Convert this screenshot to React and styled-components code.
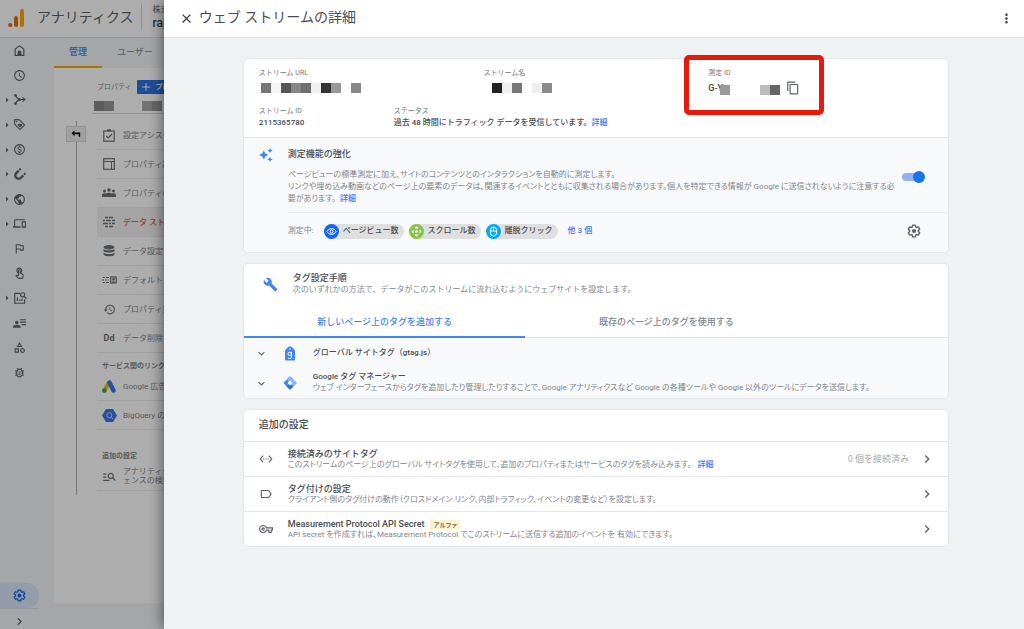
import React, { useState } from "react";
import styled, { createGlobalStyle, css } from "styled-components";
import {
  MdArrowRight,
  MdChevronRight,
  MdClose,
  MdContentCopy,
  MdDevices,
  MdHistory,
  MdKeyboardArrowDown,
  MdLabelOutline,
  MdManageSearch,
  MdMoreVert,
  MdOutlineBugReport,
  MdOutlineCategory,
  MdOutlineFlag,
  MdOutlineLoyalty,
  MdOutlineMonetizationOn,
  MdOutlineSchedule,
  MdOutlineTouchApp,
  MdOutlineVpnKey,
  MdPublic,
  MdSettingsEthernet,
} from "react-icons/md";

const GlobalStyle = createGlobalStyle`
  *, *::before, *::after {
    box-sizing: border-box;
  }

  body {
    margin: 0;
    font-family: Roboto, "Noto Sans CJK JP", sans-serif;
    font-size: 8px;
    line-height: 12px;
    color: #5f6368;
  }

  button {
    margin: 0;
    padding: 0;
    border: none;
    background: none;
    font: inherit;
    color: inherit;
    cursor: pointer;
  }

  a {
    color: #3c78e8;
    font-weight: 500;
    text-decoration: none;
  }

  h1, h2, h3, p, ul, dl, dd {
    margin: 0;
    padding: 0;
  }

  ul {
    list-style: none;
  }

  svg {
    display: block;
    flex: none;
  }
`;

/* page behind the drawer */

const Page = styled.div`
  position: relative;
  display: flex;
  flex-direction: column;
  height: 100vh;
  overflow: hidden;
  background: #f3f5f8;
`;

const TopBar = styled.header`
  display: flex;
  align-items: center;
  height: 38px;
  padding: 0 0 4px 8px;
  background: #fff;
  border-bottom: 1px solid #dfe1e4;
  white-space: nowrap;
`;

const Brand = styled.span`
  margin-left: 12px;
  font-size: 14px;
  line-height: 18px;
`;

const Account = styled.div`
  margin-left: 8px;
  padding-left: 10px;
  border-left: 1px solid #d5d7da;
`;

const AccountName = styled.div`
  font-size: 12px;
  line-height: 14px;
  font-weight: 500;
  color: #3c4043;
`;

const Main = styled.div`
  display: flex;
  flex: 1;
  min-height: 0;
`;

const Rail = styled.nav`
  display: flex;
  flex-direction: column;
  flex: none;
  width: 54px;
`;

const RailList = styled.ul`
  display: grid;
  grid-auto-rows: 1fr;
  height: 347px;
`;

const RailItem = styled.button`
  display: flex;
  align-items: center;
  height: 100%;
  padding-left: ${(p) => (p.$open ? "1px" : "13px")};
`;

const RailActive = styled.button`
  display: flex;
  align-items: center;
  width: 39px;
  height: 25px;
  margin-top: auto;
  padding-left: 13px;
  border-radius: 0 12px 12px 0;
  background: #d7e6fb;
  color: #1a66d8;
`;

const RailExpand = styled.button`
  display: flex;
  align-items: center;
  justify-content: center;
  width: 39px;
  height: 21px;
  padding-top: 5px;
  border-top: 1px solid #dfe1e4;
`;

const Admin = styled.div`
  display: flex;
  flex-direction: column;
  flex: 1;
  padding-bottom: 26px;
`;

const AdminTabs = styled.div`
  display: flex;
  height: 30px;
  flex: none;
`;

const AdminTab = styled.button`
  padding: 0 15px;
  font-size: 9px;
  border-bottom: 2px solid ${(p) => (p.$active ? "#f9ab00" : "transparent")};
  color: ${(p) => (p.$active ? "#3c82f0" : "#80868b")};
  font-weight: ${(p) => (p.$active ? 500 : 400)};
`;

const AdminCard = styled.div`
  display: flex;
  flex: 1;
  padding-top: 12px;
  background: #fff;
`;

const Timeline = styled.div`
  display: flex;
  flex-direction: column;
  align-items: center;
  width: 20px;
  height: 374px;
  margin: 41px 11px 0 12px;
  background: linear-gradient(#b0b0b0, #b0b0b0) center / 1px 100% no-repeat;
`;

const BackButton = styled.button`
  display: flex;
  align-items: center;
  justify-content: center;
  width: 20px;
  height: 16px;
  margin-top: 5px;
  border: 1px solid #d8d8d8;
  background: #ececec;
  color: #000;
`;

const Property = styled.div`
  flex: 1;
  color: #80868b;
`;

const PropertyHead = styled.div`
  display: flex;
  align-items: center;
  gap: 5px;
  height: 14px;
  font-size: 7px;
  white-space: nowrap;
`;

const CreateButton = styled.button`
  display: flex;
  align-items: center;
  gap: 6px;
  height: 14px;
  padding: 0 5px;
  border-radius: 1px;
  background: #2f74e0;
  color: #fff;
  font-weight: 700;
`;

const PropertyName = styled.div`
  display: flex;
  gap: 26px;
  height: 20px;
  margin: 0 0 7px -5px;
  padding-top: 7px;
  border-bottom: 1px solid #d5d7da;
`;

const PropertyItem = styled.button`
  display: flex;
  align-items: center;
  gap: 7px;
  width: 100%;
  height: 29px;
  padding-left: 5px;
  border-bottom: 1px solid #ececec;
  text-align: left;
  line-height: 9px;
  white-space: nowrap;
  ${(p) =>
    p.$active &&
    css`
      background: #f2f2f2;
      color: #e8584c;
      font-weight: 500;
    `}
`;

const ItemIcon = styled.span`
  display: flex;
  justify-content: center;
  width: 14px;
  font-size: 9px;
  font-weight: 700;
  color: #6c7074;
`;

const SectionLabel = styled.h3`
  margin-top: ${(p) => (p.$spaced ? "20px" : "7px")};
  padding-left: 5px;
  font-size: 7px;
  line-height: 12px;
  font-weight: 700;
  white-space: nowrap;
`;

const Scrim = styled.div`
  position: absolute;
  inset: 0;
  background: rgba(0, 0, 0, 0.32);
`;

/* drawer */

const Drawer = styled.section`
  position: absolute;
  inset: 0 0 0 16%;
  display: flex;
  flex-direction: column;
  background: #eef2f3;
  box-shadow: 0 0 14px rgba(0, 0, 0, 0.6);
`;

const DrawerBar = styled.header`
  display: flex;
  align-items: center;
  flex: none;
  gap: 5px;
  height: 38px;
  padding: 0 10px 0 15px;
  background: #fff;
  border-bottom: 1px solid #e2e5e7;
  color: #3c4043;
`;

const DrawerTitle = styled.h1`
  flex: 1;
  padding-bottom: 3px;
  font-size: 14px;
  line-height: 20px;
  font-weight: 400;
  color: #4a4d51;
`;

const DrawerBody = styled.div`
  display: flex;
  flex-direction: column;
  flex: 1;
  gap: 10px;
  padding: 20px 75px 20px 79px;
  overflow: auto;
`;

const Card = styled.section`
  flex: none;
  background: #fff;
  border: 1px solid #e3e7ea;
  border-radius: 5px;
`;

const Details = styled.dl`
  display: flex;
  flex-direction: column;
  gap: 8px;
  padding: 8px 15px;
`;

const DetailRow = styled.div`
  display: grid;
  grid-template-columns: ${(p) => p.$columns};
`;

const Label = styled.dt`
  font-size: 7px;
  line-height: 12px;
  color: #70757a;
`;

const Value = styled.dd`
  display: flex;
  align-items: center;
  height: ${(p) => (p.$tall ? "18px" : "12px")};
  color: #4a4d51;
  font-weight: 500;
`;

const MeasurementId = styled(Value)`
  font-size: 9px;
  gap: 6px;
  color: #3c4043;
`;

const Highlighted = styled.div`
  position: relative;

  &::after {
    content: "";
    position: absolute;
    top: -12px;
    left: -24px;
    width: 140px;
    height: 60px;
    border: 5px solid #e8180c;
    border-radius: 5px;
    pointer-events: none;
  }
`;

const Blocks = styled.span`
  display: flex;
  margin-left: ${(p) => (p.$inset ? "8px" : "2px")};
`;

const IdBlocks = styled(Blocks)`
  margin: 3px 0 0 -9px;
`;

const Block = styled.span`
  width: 10px;
  height: 10px;
  background: ${(p) => p.$tone};
`;

const Enhanced = styled.div`
  display: grid;
  grid-template-columns: 44px 1fr;
  border-top: 1px solid #e6e9eb;
  border-radius: 0 0 5px 5px;
  background: #f8f9fb;
`;

const Sparkles = styled.div`
  padding: 10px 0 0 15px;
`;

const EnhancedText = styled.div`
  display: flex;
  align-items: center;
  gap: 7px;
  padding: 10px 23px 7px 0;
`;

const Grow = styled.div`
  flex: 1;
`;

const Title = styled.h2`
  display: flex;
  align-items: center;
  gap: 6px;
  font-size: ${(p) => (p.$small ? "8px" : "9px")};
  line-height: ${(p) => (p.$small ? "10px" : "12px")};
  font-weight: 500;
  color: #4a4d51;
`;

const Note = styled.p`
  line-height: ${(p) => (p.$tight ? "10px" : "12px")};
  color: #80868b;
  font-feature-settings: ${(p) => (p.$wide ? "normal" : '"palt"')};

  a {
    margin-left: 4px;
  }
`;

const EnhancedNote = styled(Note)`
  margin-top: 9px;
`;

const Toggle = styled.input`
  appearance: none;
  position: relative;
  flex: none;
  width: 23px;
  height: 12px;
  margin: 0;
  cursor: pointer;

  &::before {
    content: "";
    position: absolute;
    inset: 2px 2px 2px 0;
    border-radius: 4px;
    background: ${(p) => (p.checked ? "#8fb3f5" : "#bdc1c6")};
  }

  &::after {
    content: "";
    position: absolute;
    top: 0;
    left: ${(p) => (p.checked ? "11px" : "0")};
    width: 12px;
    height: 12px;
    border-radius: 50%;
    background: ${(p) => (p.checked ? "#1a73e8" : "#fff")};
  }
`;

const ChipRow = styled.div`
  grid-column: 2;
  display: flex;
  align-items: center;
  gap: 5px;
  height: 40px;
  padding: 0 27px 3px 0;
  border-top: 1px solid #e6e9eb;
`;

const ChipLabel = styled.span`
  padding-right: 5px;
  color: #80868b;
`;

const Chip = styled.span`
  display: flex;
  align-items: center;
  gap: 4px;
  height: 15px;
  padding-right: 5px;
  border-radius: 8px;
  background: #dfdfdf;
  color: #4a4d51;
  font-weight: 500;
`;

const ChipIcon = styled.span`
  display: flex;
  align-items: center;
  justify-content: center;
  width: 15px;
  height: 15px;
  border-radius: 50%;
  background: ${(p) => p.$color};
  color: #fff;
`;

const MoreLink = styled.a`
  margin: 0 auto 0 5px;
`;

const TagHead = styled.div`
  display: flex;
  align-items: center;
  gap: 15px;
  padding: 8px 19px 12px;
`;

const TabBar = styled.div`
  display: flex;
  height: 30px;
  border-bottom: 1px solid #e3e7ea;
`;

const Tab = styled.button`
  width: 40%;
  height: 30px;
  font-size: 9px;
  font-weight: 500;
  color: ${(p) => (p.$active ? "#4285f4" : "#80868b")};
  border-bottom: 2px solid ${(p) => (p.$active ? "#4285f4" : "transparent")};
`;

const TagList = styled.div`
  border-radius: 0 0 5px 5px;
  background: #f8f9fb;
`;

const TagRow = styled.button`
  display: grid;
  grid-template-columns: 12px 14px 1fr;
  align-items: center;
  gap: 0 16px;
  width: 100%;
  height: 30px;
  padding-left: 11px;
  text-align: left;
`;

const CardTitle = styled.h2`
  padding: 8px 15px 9px;
  font-size: 10px;
  line-height: 14px;
  font-weight: 500;
  color: #4a4d51;
`;

const SettingRow = styled.div`
  display: grid;
  grid-template-columns: 19px 1fr auto 15px;
  align-items: center;
  gap: 0 10px;
  height: 35px;
  padding: 0 14px 0 15px;
  border-top: 1px solid #e6e9eb;
`;

const Count = styled.span`
  font-size: 9px;
  color: #a6aaae;
`;

const Badge = styled.span`
  padding: 0 3px;
  background: #fdf1cf;
  font-size: 6px;
  line-height: 9px;
  font-weight: 700;
  color: #80704a;
`;

const Logo = () => (
  <svg width="17" height="20" viewBox="0 -2 17 20">
    <rect x="12" y="0" width="4" height="18" rx="2" fill="#f9ab00" />
    <rect x="6" y="7" width="4" height="11" rx="2" fill="#e37400" />
    <circle cx="2.2" cy="16" r="2.1" fill="#e37400" />
  </svg>
);

const HomeIcon = () => (
  <svg width="13" height="13" viewBox="0 0 24 24" fill="none" stroke="currentColor" strokeWidth="2.2">
    <path d="M4 21V9.5L12 3.5l8 6V21z" />
    <path d="M8.500 21v-5.500a3.500 3.500 0 0 1 7 0V21z" fill="currentColor" stroke="none" />
  </svg>
);

const BranchIcon = () => (
  <svg width="13" height="13" viewBox="0 0 24 24" fill="none" stroke="currentColor" strokeWidth="2.2">
    <path d="M5 4.500l1.500 3.500 5 4h10M5 19.500L6.500 16l5-4" />
    <path d="M17.500 8l4.500 4-4.500 4" />
    <circle cx="4.500" cy="4.500" r="2.500" fill="currentColor" stroke="none" />
    <circle cx="4.500" cy="19.500" r="2.500" fill="currentColor" stroke="none" />
    <circle cx="12" cy="12" r="2.800" fill="currentColor" stroke="none" />
  </svg>
);

const MagnetIcon = () => (
  <svg width="13" height="13" viewBox="0 0 24 24" fill="none" stroke="currentColor">
    <path d="M10.500 5L6 9.500a5.800 5.800 0 0 0 8.500 8.500l4.500-4.500" strokeWidth="4.500" />
    <path d="M12 3.500l2.500-2.500M20.500 12l2.500-2.500" strokeWidth="4" />
    <path d="M9.500 12.500l-1 1a1.500 1.500 0 0 0 2 2l1-1" stroke="#f3f5f8" strokeWidth="1.200" />
  </svg>
);

const ReportIcon = () => (
  <svg width="14" height="14" viewBox="0 0 24 24" fill="none" stroke="currentColor" strokeWidth="2">
    <path d="M12 4H3v17h17v-7" />
    <path d="M7.500 17v-6M11.500 17v-3M15.500 17v-4" />
    <circle cx="16.500" cy="6.500" r="3.500" />
    <path d="M19 9l4 4" />
  </svg>
);

const PersonListIcon = () => (
  <svg width="13" height="13" viewBox="0 0 24 24" fill="currentColor">
    <circle cx="7" cy="10" r="3.300" />
    <path d="M0 20v-2c0-2.500 3.500-3.800 7-3.800s7 1.300 7 3.800v2zM13 4h11v2.200H13zM13 8.500h11v2.200H13zM16 13h8v2.200h-8z" />
  </svg>
);

const GearIcon = ({ size }) => (
  <svg width={size} height={size} viewBox="0 0 24 24">
    <path
      fill="none"
      stroke="currentColor"
      strokeWidth="2.400"
      d="M19.430 12.980c.04-.32.07-.64.07-.98 0-.34-.03-.66-.07-.98l2.110-1.650c.19-.15.24-.42.12-.64l-2-3.460a.5.5 0 0 0-.61-.22l-2.490 1c-.52-.4-1.080-.73-1.690-.98l-.38-2.650A.488.488 0 0 0 14 2h-4c-.25 0-.46.18-.49.42l-.38 2.650c-.61.25-1.170.59-1.690.98l-2.490-1a.5.5 0 0 0-.61.22l-2 3.460c-.13.22-.07.49.12.64l2.110 1.650c-.04.32-.07.65-.07.98 0 .33.03.66.07.98l-2.110 1.650c-.19.15-.24.42-.12.64l2 3.460a.5.5 0 0 0 .61.22l2.490-1c.52.4 1.080.73 1.690.98l.38 2.650c.03.24.24.42.49.42h4c.25 0 .46-.18.49-.42l.38-2.650c.61-.25 1.170-.59 1.690-.98l2.490 1a.5.5 0 0 0 .61-.22l2-3.460c.12-.22.07-.49-.12-.64z"
    />
    <circle cx="12" cy="12" r="3.600" fill="currentColor" />
  </svg>
);

const BackIcon = () => (
  <svg width="10" height="8" viewBox="0 0 10 8">
    <path d="M3.500.5L.5 3.300l3 2.900V4.200h4.300v2.600h1.400V2.500H3.500z" fill="currentColor" />
  </svg>
);

const ClipboardIcon = () => (
  <svg width="12" height="13" viewBox="0 0 12 13" fill="none" stroke="currentColor" strokeWidth="1.200">
    <rect x="0.800" y="2" width="10.400" height="10.200" />
    <path d="M4 1.300h4" strokeWidth="2" />
    <path d="M3.300 7l2 2 3.700-4" />
  </svg>
);

const LayoutIcon = () => (
  <svg width="12" height="12" viewBox="0 0 12 12" fill="none" stroke="currentColor">
    <rect x="0.700" y="0.700" width="10.600" height="10.600" strokeWidth="1.200" />
    <path d="M1 3.500h10M8.500 4v7" />
  </svg>
);

const PeopleIcon = () => (
  <svg width="14" height="10" viewBox="0 0 14 10" fill="currentColor">
    <circle cx="2.500" cy="3" r="1.500" />
    <circle cx="7" cy="2" r="1.800" />
    <circle cx="11.500" cy="3" r="1.500" />
    <path d="M0 9V7c0-1.200 1.200-1.700 2.500-1.700.6 0 1.100.1 1.500.3.700-.6 1.800-.9 3-.9s2.300.3 3 .9c.4-.2.900-.3 1.500-.3 1.300 0 2.500.5 2.500 1.700v2z" />
  </svg>
);

const StreamsIcon = () => (
  <svg width="12" height="12" viewBox="0 0 12 12" fill="none" stroke="currentColor" strokeWidth="1.500">
    <path d="M2 1.500h3M6 1.500h4M0 4.500h2M3 4.500h5M9 4.500h3M0 7.500h5M6 7.500h2M9 7.500h3M2 10.500h3M6 10.500h4" />
  </svg>
);

const DatabaseIcon = () => (
  <svg width="12" height="12" viewBox="0 0 12 12" fill="currentColor">
    <ellipse cx="6" cy="2.200" rx="5.500" ry="2.200" />
    <path d="M.5 3.800c1.500 2 9.500 2 11 0V6c-1.500 2-9.500 2-11 0zM.5 7.400c1.500 2 9.500 2 11 0v2c-1.500 2.600-9.500 2.600-11 0z" />
  </svg>
);

const IdentityIcon = () => (
  <svg width="15" height="8" viewBox="0 0 15 8" fill="none" stroke="currentColor" strokeWidth="1.200">
    <path d="M1 1.500h2M4 1.500h3M0 4h2M3 4h2M1 6.500h2M4 6.500h3M6 4h1" />
    <rect x="8.700" y="1" width="5.500" height="6" />
    <circle cx="11.500" cy="3.300" r=".8" fill="currentColor" />
    <path d="M10 6h3" />
  </svg>
);

const AdsIcon = () => (
  <svg width="14" height="13" viewBox="0 0 14 13" strokeLinecap="round">
    <path d="M2.500 10.500L6.500 3" stroke="#fbbc04" strokeWidth="4" />
    <path d="M7.500 2.500l4 8" stroke="#3c78e8" strokeWidth="4.500" />
    <circle cx="2.400" cy="10.600" r="2.300" fill="#34a853" />
  </svg>
);

const BigQueryIcon = () => (
  <svg width="15" height="13" viewBox="0 0 15 13">
    <path d="M4 0h7l4 6.500-4 6.500H4L0 6.500z" fill="#3c78e8" />
    <circle cx="7.300" cy="6.200" r="2.500" fill="none" stroke="#c3d6f8" />
    <path d="M9 8l2 2" stroke="#c3d6f8" />
  </svg>
);

const SparkleIcon = () => (
  <svg width="14" height="14" viewBox="0 0 14 14" fill="#4285f4">
    <path d="M4.800 2.500l1.600 3L9.500 7 6.400 8.500l-1.600 3-1.600-3L0 7l3.200-1.500zM11 .2l.9 1.600 1.700.8-1.700.8L11 5l-.9-1.600-1.700-.8 1.700-.8zM11 9l.9 1.600 1.700.8-1.700.8-.9 1.600-.9-1.600-1.700-.8 1.700-.8z" />
  </svg>
);

const EyeIcon = () => (
  <svg width="11" height="11" viewBox="0 0 11 11" fill="none" stroke="currentColor">
    <path d="M.8 5.500C2.800 1.800 8.200 1.800 10.200 5.500 8.200 9.200 2.800 9.200.8 5.500z" />
    <circle cx="5.500" cy="5.500" r="1.500" />
  </svg>
);

const ScrollIcon = () => (
  <svg width="11" height="11" viewBox="0 0 11 11" fill="currentColor">
    <circle cx="5.500" cy="5.500" r="1.300" />
    <path d="M5.500.3l2 2.200h-4zM5.500 10.700l2-2.200h-4zM.3 5.500l2.200-2v4zM10.700 5.500l-2.200-2v4z" />
  </svg>
);

const MouseIcon = () => (
  <svg width="9" height="11" viewBox="0 0 9 11" fill="none" stroke="currentColor">
    <rect x="1.500" y="1" width="6" height="9" rx="3" />
    <path d="M1.500 5h6M4.500 1v4" />
  </svg>
);

const WrenchIcon = () => (
  <svg width="15" height="15" viewBox="0 0 24 24">
    <path
      fill="#4285f4"
      d="M22.700 19l-9.100-9.100c.9-2.300.4-5-1.500-6.900-2-2-5-2.400-7.400-1.300L9 6 6 9 1.600 4.700C.4 7.100.9 10.100 2.900 12.100c1.900 1.900 4.600 2.400 6.900 1.500l9.100 9.100c.4.4 1 .4 1.400 0l2.300-2.300c.5-.4.5-1.100.1-1.400z"
    />
  </svg>
);

const GtagIcon = () => (
  <svg width="14" height="15" viewBox="0 0 14 15">
    <path d="M4.500 1.500h5l2.500 3v9a1 1 0 0 1-1 1H3a1 1 0 0 1-1-1v-9z" fill="#4285f4" />
    <path d="M5 2a2 1.700 0 0 1 4 0" fill="#4285f4" />
    <circle cx="7" cy="3" r=".7" fill="#fff" />
    <circle cx="6.700" cy="7.800" r="1.700" fill="none" stroke="#fff" />
    <path d="M8.500 6v5c0 1.800-2.800 2-3.500.8" fill="none" stroke="#fff" />
  </svg>
);

const TagManagerIcon = () => (
  <svg width="14" height="14" viewBox="0 0 14 14">
    <path d="M7 .3L13.700 7 7 13.700.3 7z" fill="#4285f4" />
    <path d="M7 .3L13.700 7 10 10.700 3.700 3.600z" fill="#8ab4f8" />
    <path d="M3.600 10.400L7 13.700l3.300-3.300L7 7.800z" fill="#2f6fe0" />
    <path d="M7 4.600L9.400 7 7 9.400 4.600 7z" fill="#fff" />
  </svg>
);

const railItems = [
  { label: "ホーム", icon: <HomeIcon /> },
  { label: "リアルタイム", icon: <MdOutlineSchedule size={13} /> },
  { label: "ライフサイクル", icon: <BranchIcon />, open: true },
  { label: "エンゲージメント", icon: <MdOutlineLoyalty size={13} />, open: true },
  { label: "収益化", icon: <MdOutlineMonetizationOn size={13} />, open: true },
  { label: "維持率", icon: <MagnetIcon />, open: true },
  { label: "ユーザー属性", icon: <MdPublic size={13} />, open: true },
  { label: "テクノロジー", icon: <MdDevices size={13} />, open: true },
  { label: "コンバージョン", icon: <MdOutlineFlag size={13} /> },
  { label: "イベント", icon: <MdOutlineTouchApp size={13} /> },
  { label: "探索", icon: <ReportIcon />, open: true },
  { label: "オーディエンス", icon: <PersonListIcon /> },
  { label: "カスタム定義", icon: <MdOutlineCategory size={13} /> },
  { label: "DebugView", icon: <MdOutlineBugReport size={13} /> },
];

const propertyItems = [
  { text: "設定アシスタント", icon: <ClipboardIcon /> },
  { text: "プロパティ設定", icon: <LayoutIcon /> },
  { text: "プロパティのアクセス管理", icon: <PeopleIcon /> },
  { text: "データ ストリーム", icon: <StreamsIcon />, active: true },
  { text: "データ設定", icon: <DatabaseIcon /> },
  { text: "デフォルト", icon: <IdentityIcon /> },
  { text: "プロパティ変更履歴", icon: <MdHistory size={13} /> },
  { text: "データ削除リクエスト", icon: "Dd" },
];

const chips = [
  { text: "ページビュー数", color: "#1a66e8", icon: <EyeIcon /> },
  { text: "スクロール数", color: "#8bc34a", icon: <ScrollIcon /> },
  { text: "離脱クリック", color: "#03a9f4", icon: <MouseIcon /> },
];

const urlTones = ["#777", "#f5f5f5", "#555", "#868686", "#707070", "#eee", "#333", "#999", "#fff", "#888"];
const nameTones = ["#222", "#eee", "#777", "#fff", "#eee", "#8b8b8b"];
const idTones = ["#999", "#fff", "#fff", "#fff", "#bbb", "#666"];

const Mosaic = ({ tones, as: Wrapper = Blocks, inset }) => (
  <Wrapper $inset={inset}>
    {tones.map((tone, i) => (
      <Block key={i} $tone={tone} />
    ))}
  </Wrapper>
);

const PropertyRow = ({ icon, text, active }) => (
  <PropertyItem $active={active}>
    <ItemIcon>{icon}</ItemIcon>
    <span>{text}</span>
  </PropertyItem>
);

const AdminPage = () => (
  <>
    <TopBar>
      <Logo />
      <Brand>アナリティクス</Brand>
      <Account>
        <div>株式会社</div>
        <AccountName>rapport</AccountName>
      </Account>
    </TopBar>
    <Main>
      <Rail>
        <RailList>
          {railItems.map((item) => (
            <li key={item.label}>
              <RailItem $open={item.open} aria-label={item.label}>
                {item.open && <MdArrowRight size={12} />}
                {item.icon}
              </RailItem>
            </li>
          ))}
        </RailList>
        <RailActive aria-label="管理">
          <GearIcon size={13} />
        </RailActive>
        <RailExpand aria-label="展開">
          <MdChevronRight size={15} />
        </RailExpand>
      </Rail>
      <Admin>
        <AdminTabs>
          <AdminTab $active>管理</AdminTab>
          <AdminTab>ユーザー</AdminTab>
        </AdminTabs>
        <AdminCard>
          <Timeline>
            <BackButton aria-label="戻る">
              <BackIcon />
            </BackButton>
          </Timeline>
          <Property>
            <PropertyHead>
              プロパティ
              <CreateButton>
                <svg width="8" height="8" viewBox="0 0 8 8" stroke="currentColor">
                  <path d="M4 0v8M0 4h8" />
                </svg>
                プロパティを作成
              </CreateButton>
            </PropertyHead>
            <PropertyName>
              <Mosaic tones={["#888", "#999"]} />
              <Mosaic tones={["#aaa", "#999"]} />
            </PropertyName>
            {propertyItems.map((item) => (
              <PropertyRow key={item.text} {...item} />
            ))}
            <SectionLabel>サービス関のリンク</SectionLabel>
            <PropertyRow icon={<AdsIcon />} text="Google 広告のリンク" />
            <PropertyRow icon={<BigQueryIcon />} text="BigQuery のリンク" />
            <SectionLabel $spaced>追加の設定</SectionLabel>
            <PropertyItem>
              <ItemIcon>
                <MdManageSearch size={15} />
              </ItemIcon>
              <span>
                アナリティクス
                <br />
                ェンスの検索履歴
              </span>
            </PropertyItem>
          </Property>
        </AdminCard>
      </Admin>
    </Main>
  </>
);

const App = () => {
  const [enhanced, setEnhanced] = useState(true);
  const [tab, setTab] = useState("new");

  return (
    <Page>
      <GlobalStyle />
      <AdminPage />
      <Scrim />
      <Drawer>
        <DrawerBar>
          <button aria-label="閉じる">
            <MdClose size={15} />
          </button>
          <DrawerTitle>ウェブ ストリームの詳細</DrawerTitle>
          <button aria-label="その他">
            <MdMoreVert size={15} />
          </button>
        </DrawerBar>

        <DrawerBody>
          <Card>
            <Details>
              <DetailRow $columns="1fr 1fr 1fr">
                <div>
                  <Label>ストリーム URL</Label>
                  <Value $tall>
                    <Mosaic tones={urlTones} />
                  </Value>
                </div>
                <div>
                  <Label>ストリーム名</Label>
                  <Value $tall>
                    <Mosaic tones={nameTones} inset />
                  </Value>
                </div>
                <Highlighted>
                  <Label>測定 ID</Label>
                  <MeasurementId $tall>
                    G-Y
                    <Mosaic tones={idTones} as={IdBlocks} />
                    <button aria-label="コピー">
                      <MdContentCopy size={14} color="#5f6368" />
                    </button>
                  </MeasurementId>
                </Highlighted>
              </DetailRow>
              <DetailRow $columns="1fr 4fr">
                <div>
                  <Label>ストリーム ID</Label>
                  <Value>2115365780</Value>
                </div>
                <div>
                  <Label>ステータス</Label>
                  <Value>
                    過去 48 時間にトラフィック データを受信しています。
                    <a href="#status">詳細</a>
                  </Value>
                </div>
              </DetailRow>
            </Details>

            <Enhanced>
              <Sparkles>
                <SparkleIcon />
              </Sparkles>
              <EnhancedText>
                <Grow>
                  <Title>測定機能の強化</Title>
                  <EnhancedNote>
                    ページビューの標準測定に加え、サイトのコンテンツとのインタラクションを自動的に測定します。
                    <br />
                    リンクや埋め込み動画などのページ上の要素のデータは、関連するイベントとともに収集される場合があります。個人を特定できる情報が
                    Google に送信されないように注意する必要があります。
                    <a href="#enhanced">詳細</a>
                  </EnhancedNote>
                </Grow>
                <Toggle
                  type="checkbox"
                  role="switch"
                  aria-label="測定機能の強化"
                  checked={enhanced}
                  onChange={(e) => setEnhanced(e.target.checked)}
                />
              </EnhancedText>
              <ChipRow>
                <ChipLabel>測定中:</ChipLabel>
                {chips.map((chip) => (
                  <Chip key={chip.text}>
                    <ChipIcon $color={chip.color}>{chip.icon}</ChipIcon>
                    {chip.text}
                  </Chip>
                ))}
                <MoreLink href="#more">他 3 個</MoreLink>
                <button aria-label="設定">
                  <GearIcon size={14} />
                </button>
              </ChipRow>
            </Enhanced>
          </Card>

          <Card>
            <TagHead>
              <WrenchIcon />
              <div>
                <Title>タグ設定手順</Title>
                <Note $wide>
                  次のいずれかの方法で、データがこのストリームに流れ込むようにウェブサイトを設定します。
                </Note>
              </div>
            </TagHead>
            <TabBar role="tablist">
              <Tab role="tab" $active={tab === "new"} onClick={() => setTab("new")}>
                新しいページ上のタグを追加する
              </Tab>
              <Tab role="tab" $active={tab === "existing"} onClick={() => setTab("existing")}>
                既存のページ上のタグを使用する
              </Tab>
            </TabBar>
            <TagList>
              <TagRow>
                <MdKeyboardArrowDown size={13} />
                <GtagIcon />
                <Title as="span" $small>
                  グローバル サイトタグ（gtag.js）
                </Title>
              </TagRow>
              <TagRow>
                <MdKeyboardArrowDown size={13} />
                <TagManagerIcon />
                <span>
                  <Title as="span" $small>
                    Google タグ マネージャー
                  </Title>
                  <Note as="span" $tight>
                    ウェブ インターフェースからタグを追加したり管理したりすることで、Google アナリティクスなど Google
                    の各種ツールや Google 以外のツールにデータを送信します。
                  </Note>
                </span>
              </TagRow>
            </TagList>
          </Card>

          <Card>
            <CardTitle>追加の設定</CardTitle>
            <SettingRow>
              <MdSettingsEthernet size={14} />
              <div>
                <Title>接続済みのサイトタグ</Title>
                <Note $tight>
                  このストリームのページ上のグローバル サイトタグを使用して、追加のプロパティまたはサービスのタグを読み込みます。{" "}
                  <a href="#connected">詳細</a>
                </Note>
              </div>
              <Count>0 個を接続済み</Count>
              <MdChevronRight size={16} />
            </SettingRow>
            <SettingRow>
              <MdLabelOutline size={14} />
              <div>
                <Title>タグ付けの設定</Title>
                <Note $tight>
                  クライアント側のタグ付けの動作（クロスドメイン リンク、内部トラフィック、イベントの変更など）を設定します。
                </Note>
              </div>
              <span />
              <MdChevronRight size={16} />
            </SettingRow>
            <SettingRow>
              <MdOutlineVpnKey size={14} />
              <div>
                <Title>
                  Measurement Protocol API Secret <Badge>アルファ</Badge>
                </Title>
                <Note $tight>
                  API secret を作成すれば、Measurement Protocol でこのストリームに送信する追加のイベントを 有効にできます。
                </Note>
              </div>
              <span />
              <MdChevronRight size={16} />
            </SettingRow>
          </Card>
        </DrawerBody>
      </Drawer>
    </Page>
  );
};

export default App;
